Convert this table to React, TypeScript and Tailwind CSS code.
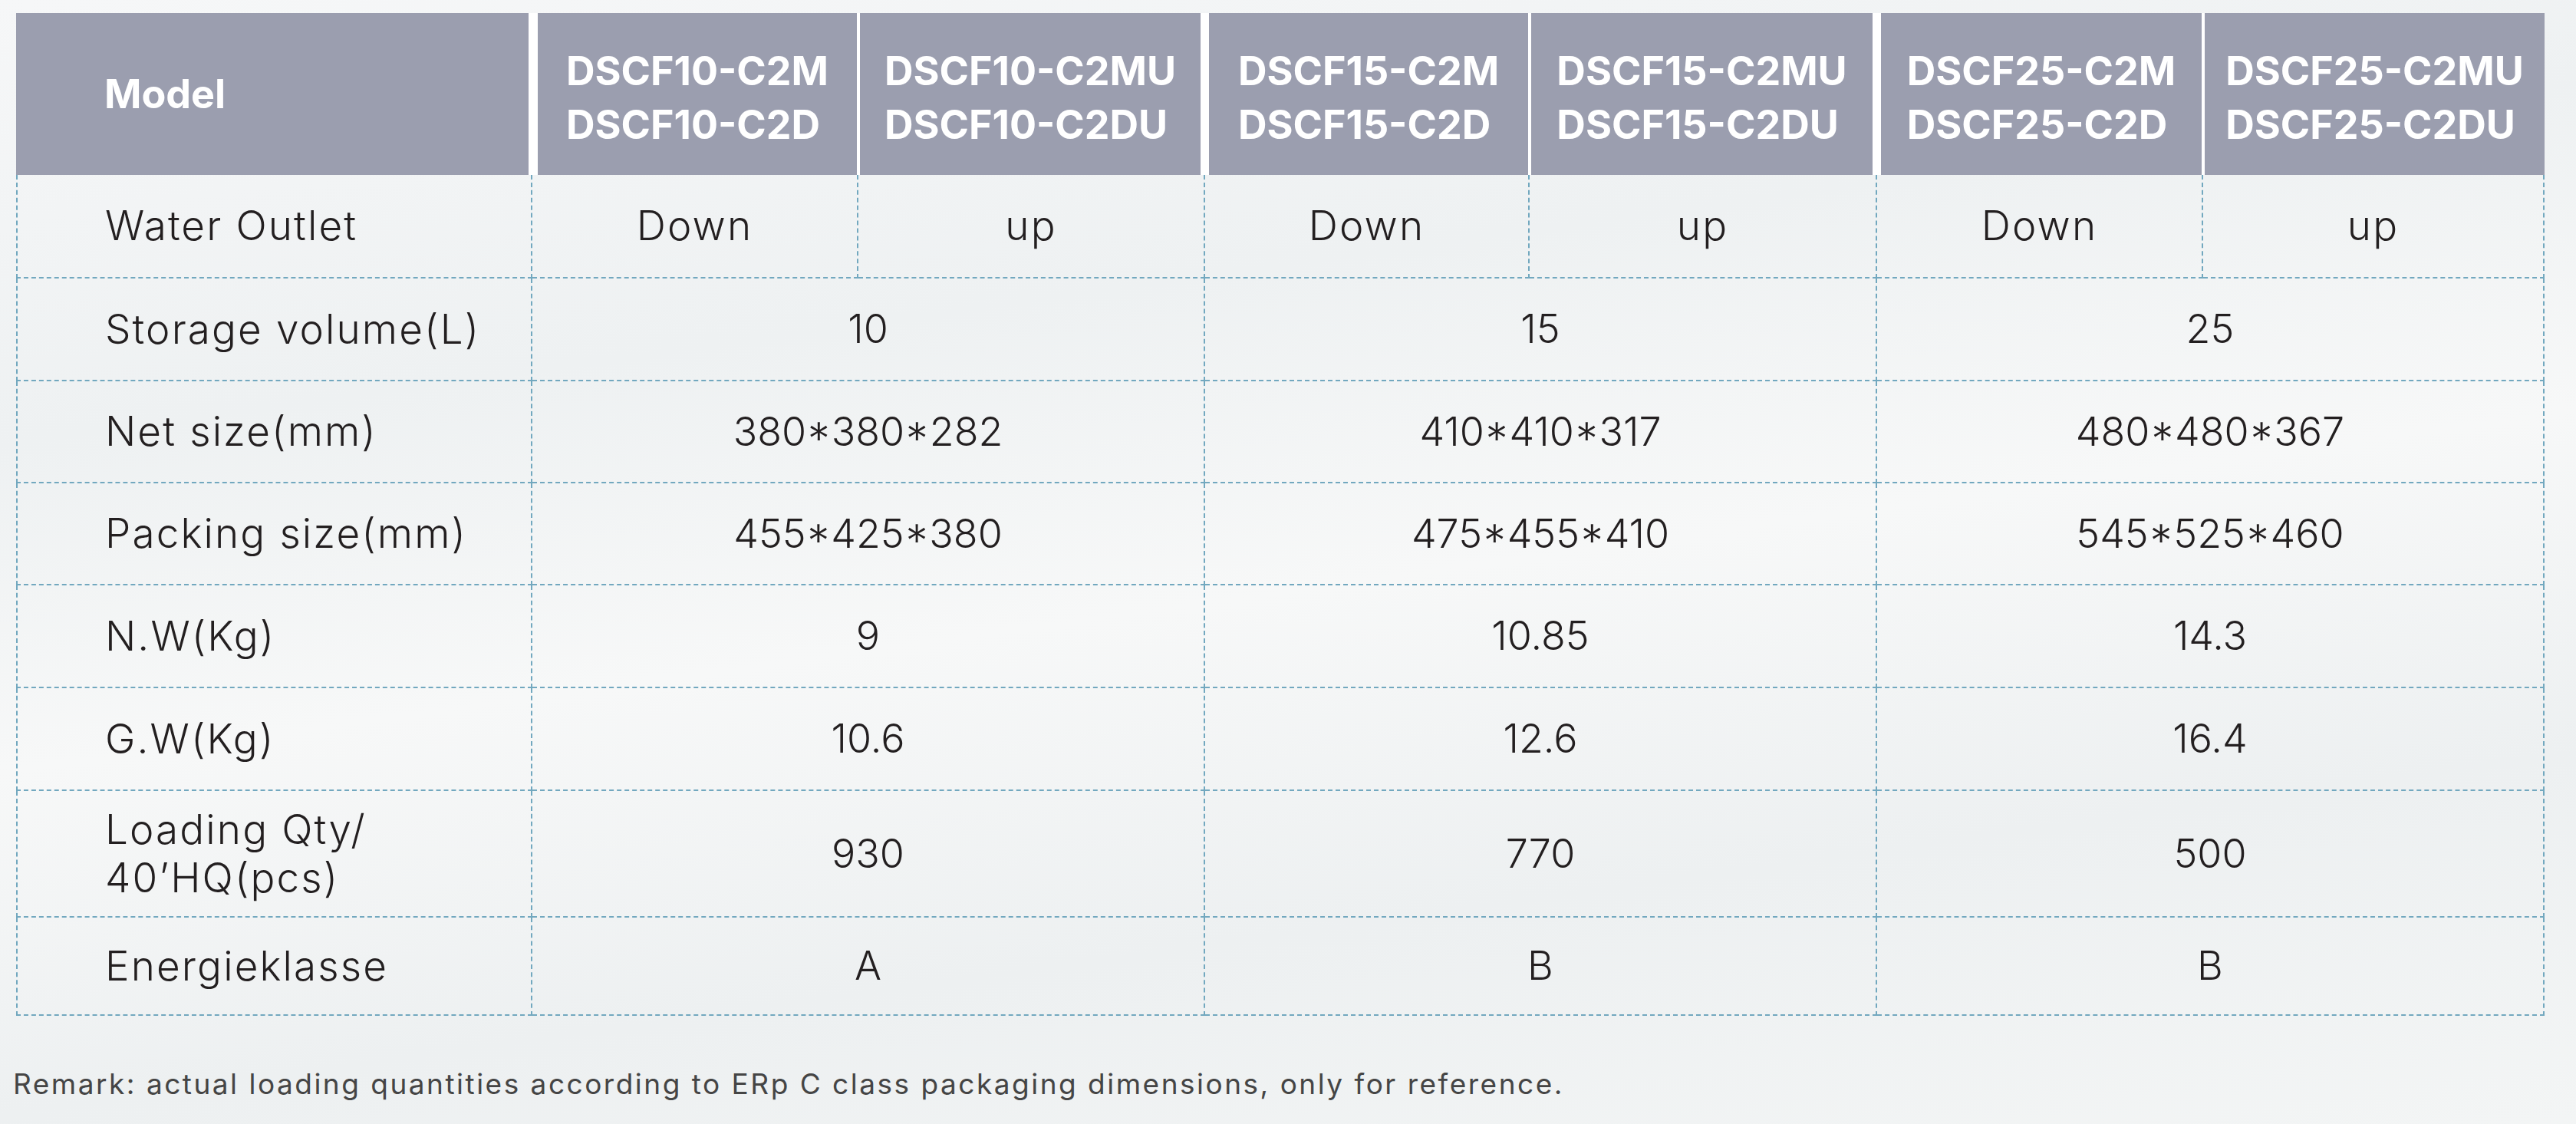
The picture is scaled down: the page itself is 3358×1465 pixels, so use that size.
import React from 'react'

const cols = 'grid grid-cols-[673px_425px_452px_423px_453px_425px_445px]'

const models = [
  { lines: ['DSCF10-C2M', 'DSCF10-C2D'], edge: 'border-l-[7px] border-r-[2px]' },
  { lines: ['DSCF10-C2MU', 'DSCF10-C2DU'], edge: 'border-l-[2px] border-r-[6px]' },
  { lines: ['DSCF15-C2M', 'DSCF15-C2D'], edge: 'border-l-[5px] border-r-[2px]' },
  { lines: ['DSCF15-C2MU', 'DSCF15-C2DU'], edge: 'border-l-[2px] border-r-[6px]' },
  { lines: ['DSCF25-C2M', 'DSCF25-C2D'], edge: 'border-l-[5px] border-r-[2px]' },
  { lines: ['DSCF25-C2MU', 'DSCF25-C2DU'], edge: 'border-l-[2px]' },
]

const rows: { label: React.ReactNode; values: string[]; h: string }[] = [
  { label: 'Storage volume(L)', values: ['10', '15', '25'], h: 'h-[134px]' },
  { label: 'Net size(mm)', values: ['380*380*282', '410*410*317', '480*480*367'], h: 'h-[133px]' },
  { label: 'Packing size(mm)', values: ['455*425*380', '475*455*410', '545*525*460'], h: 'h-[133px]' },
  { label: 'N.W(Kg)', values: ['9', '10.85', '14.3'], h: 'h-[134px]' },
  { label: 'G.W(Kg)', values: ['10.6', '12.6', '16.4'], h: 'h-[134px]' },
  {
    label: (
      <>
        Loading Qty/
        <br />
        40’HQ(pcs)
      </>
    ),
    values: ['930', '770', '500'],
    h: 'h-[165px]',
  },
  { label: 'Energieklasse', values: ['A', 'B', 'B'], h: 'h-[128px]' },
]

const line = 'border-dashed border-[#72a8bf]'

function LabelCell({ children, h }: { children: React.ReactNode; h: string }) {
  return (
    <div className={`${h} ${line} flex items-center border-b-2 border-l-2 border-r-2 pl-[114px] text-[53px] leading-[63px] tracking-[0.04em]`}>
      <span>{children}</span>
    </div>
  )
}

export default function App() {
  return (
    <div className="min-h-screen w-full overflow-hidden bg-[linear-gradient(172deg,#f6f7f8_0%,#eef1f2_30%,#f7f8f8_52%,#edf0f1_75%,#f3f5f5_100%)] pt-[17px] font-['Inter',sans-serif] text-[52px] font-light text-[#231f20]">
      <div className="ml-[21px] w-[3296px]">
        {/* header */}
        <div className={`${cols} h-[211px] font-bold text-white`}>
          <div className="flex items-center border-r-[5px] border-white bg-[#9b9eaf] pl-[115px]">Model</div>
          {models.map((m) => (
            <div key={m.lines[0]} className={`${m.edge} flex items-center justify-center border-white bg-[#9b9eaf] pt-[10px]`}>
              <div className="text-left leading-[70px]">
                {m.lines.map((l) => (
                  <div key={l}>{l}</div>
                ))}
              </div>
            </div>
          ))}
        </div>

        {/* water outlet */}
        <div className={cols}>
          <LabelCell h="h-[135px]">Water Outlet</LabelCell>
          {['Down', 'up', 'Down', 'up', 'Down', 'up'].map((v, i) => (
            <div key={i} className={`${line} flex h-[135px] items-center justify-center border-b-2 border-r-2 text-[53px] tracking-[0.04em]`}>
              {v}
            </div>
          ))}
        </div>

        {rows.map((r, i) => (
          <div key={i} className={cols}>
            <LabelCell h={r.h}>{r.label}</LabelCell>
            {r.values.map((v, j) => (
              <div key={j} className={`${r.h} ${line} col-span-2 flex items-center justify-center border-b-2 border-r-2`}>
                {v}
              </div>
            ))}
          </div>
        ))}
      </div>

      <p className="ml-[17px] mt-[67px] text-[37px] font-normal leading-[44px] tracking-[2.5px] text-[#454545]">
        Remark: actual loading quantities according to ERp C class packaging dimensions, only for reference.
      </p>
    </div>
  )
}
